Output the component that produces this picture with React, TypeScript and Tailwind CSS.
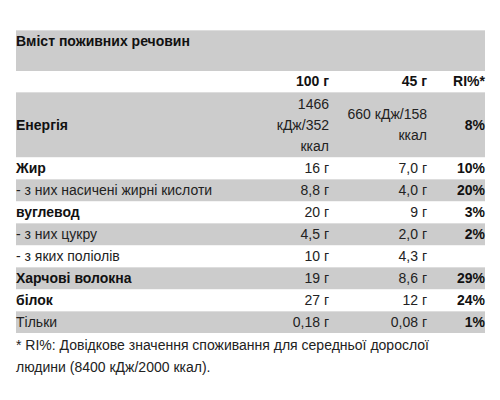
import React from "react";

type Row = { label: string; bold: boolean; a: string; b: string; ri: string; gray: boolean };

const rows: Row[] = [
  { label: "Жир", bold: true, a: "16 г", b: "7,0 г", ri: "10%", gray: false },
  { label: "- з них насичені жирні кислоти", bold: false, a: "8,8 г", b: "4,0 г", ri: "20%", gray: true },
  { label: "вуглевод", bold: true, a: "20 г", b: "9 г", ri: "3%", gray: false },
  { label: "- з них цукру", bold: false, a: "4,5 г", b: "2,0 г", ri: "2%", gray: true },
  { label: "- з яких поліолів", bold: false, a: "10 г", b: "4,3 г", ri: "", gray: false },
  { label: "Харчові волокна", bold: true, a: "19 г", b: "8,6 г", ri: "29%", gray: true },
  { label: "білок", bold: true, a: "27 г", b: "12 г", ri: "24%", gray: false },
  { label: "Тільки", bold: false, a: "0,18 г", b: "0,08 г", ri: "1%", gray: true },
];

const grid = "grid grid-cols-[1fr_64px_98px_58px] items-center";

export default function App() {
  return (
    <div
      className="w-[500px] h-[400px] bg-white pt-[30px] px-[16px] text-[14px] leading-[21px] text-[#222]"
      style={{ fontFamily: '"Liberation Sans", Arial, sans-serif' }}
    >
      <div className="w-[469px]">
        <div className="bg-[#cccccc] border-t border-[#dddddd] h-[41px] font-bold text-[#111]">
          Вміст поживних речовин
        </div>
        <div className={`${grid} h-[21px] font-bold text-[#111]`}>
          <div></div>
          <div className="text-right">100 г</div>
          <div className="text-right">45 г</div>
          <div className="text-right">RI%*</div>
        </div>
        <div className={`${grid} bg-[#cccccc] border-t border-[#dddddd] h-[65px]`}>
          <div className="font-bold text-[#111]">Енергія</div>
          <div className="text-right">
            <div>1466</div>
            <div>кДж/352</div>
            <div>ккал</div>
          </div>
          <div className="text-right">
            <div>660 кДж/158</div>
            <div>ккал</div>
          </div>
          <div className="text-right font-bold text-[#111]">8%</div>
        </div>
        {rows.map((r, i) => (
          <div
            key={i}
            className={`${grid} h-[22px] border-t ${r.gray ? "bg-[#cccccc] border-[#dddddd]" : "bg-white border-[#f4f4f4]"}`}
          >
            <div className={r.bold ? "font-bold text-[#111]" : ""}>{r.label}</div>
            <div className="text-right">{r.a}</div>
            <div className="text-right">{r.b}</div>
            <div className="text-right font-bold text-[#111]">{r.ri}</div>
          </div>
        ))}
        <div className="mt-[1px] leading-[22px]">
          <div>* RI%: Довідкове значення споживання для середньої дорослої</div>
          <div>людини (8400 кДж/2000 ккал).</div>
        </div>
      </div>
    </div>
  );
}
